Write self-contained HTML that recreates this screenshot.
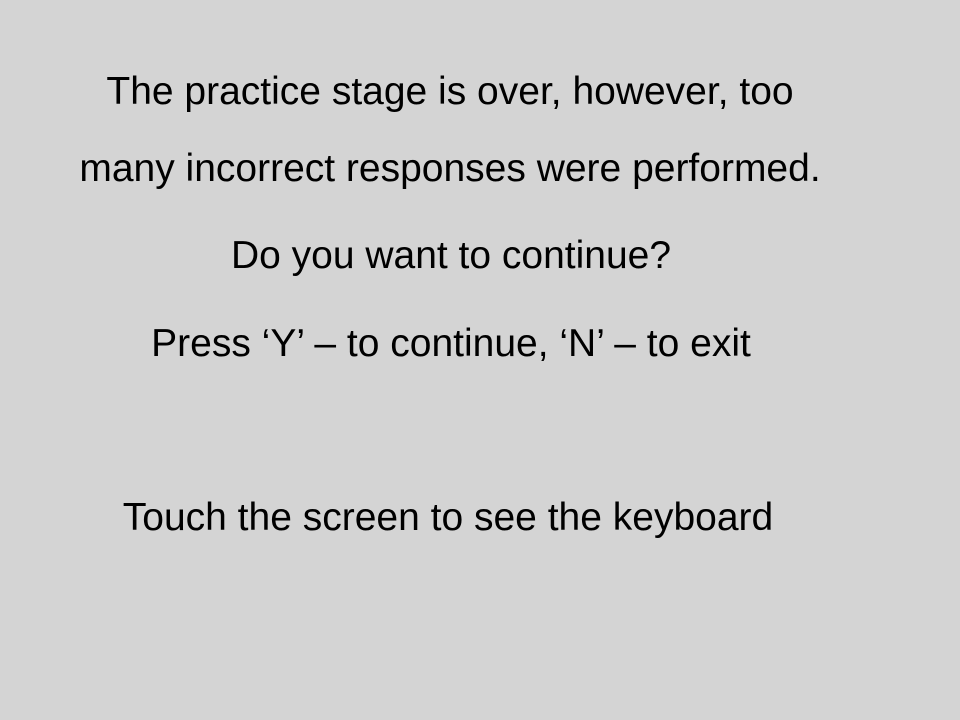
<!DOCTYPE html>
<html><head><meta charset="utf-8"><style>
html,body{margin:0;padding:0;}
body{width:960px;height:720px;background:#d4d4d4;position:relative;overflow:hidden;font-family:"Liberation Sans",sans-serif;color:#000;}
.l{position:absolute;left:0;width:900px;text-align:center;font-size:39px;line-height:40px;white-space:nowrap;}
</style></head><body>
<div class="l" style="top:72px">The practice stage is over, however, too</div>
<div class="l" style="top:149px">many incorrect responses were performed.</div>
<div class="l" style="top:236px;width:902px">Do you want to continue?</div>
<div class="l" style="top:324px;width:902px">Press ‘Y’ – to continue, ‘N’ – to exit</div>
<div class="l" style="top:498px;width:896px">Touch the screen to see the keyboard</div>
</body></html>
